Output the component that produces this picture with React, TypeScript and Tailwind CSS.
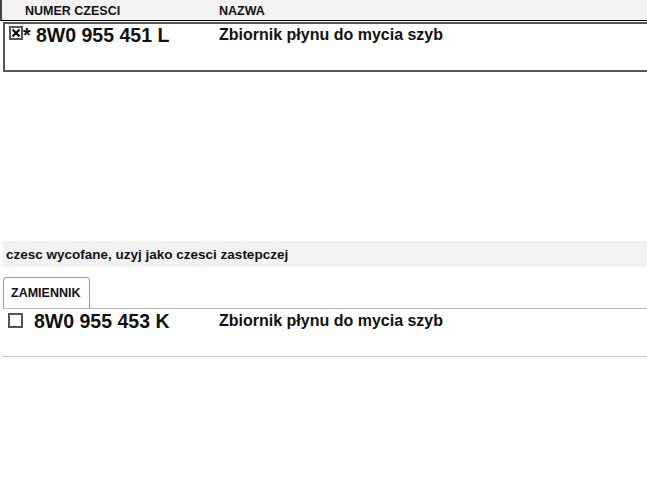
import React from 'react'

function Checkbox({ checked, size }: { checked?: boolean; size: number }) {
  return (
    <svg width={size} height={size} viewBox={`0 0 ${size} ${size}`} className="shrink-0">
      <rect x="1" y="1" width={size - 2} height={size - 2} fill="#fff" stroke="#555" strokeWidth="2" />
      {checked && (
        <path
          d={`M3.5 3.5 L${size - 3.5} ${size - 3.5} M${size - 3.5} 3.5 L3.5 ${size - 3.5}`}
          stroke="#000"
          strokeWidth="2.2"
        />
      )}
    </svg>
  )
}

export default function App() {
  return (
    <div className="w-[647px] h-[497px] overflow-hidden bg-white text-[#111] font-['Liberation_Sans',Arial,sans-serif]">
      {/* header */}
      <div className="flex h-[21px] bg-[#f2f2f2] border-l-2 border-l-[#444] border-b border-b-black pt-[4px] text-[12.5px] leading-[14px] font-bold">
        <div className="w-[217px] pl-[23px]">NUMER CZESCI</div>
        <div>NAZWA</div>
      </div>

      {/* selected part */}
      <div className="mt-px ml-[3px] h-[50px] border-2 border-r-0 border-[#555]">
        <div className="flex items-start">
          <div className="w-[214px] flex items-start pl-[4px]">
            <div className="mt-[2px]">
              <Checkbox checked size={14} />
            </div>
            <span className="text-[19.5px] leading-[22px] font-bold whitespace-pre">* 8W0 955 451 L</span>
          </div>
          <span className="text-[16px] leading-[22px] font-bold">Zbiornik płynu do mycia szyb</span>
        </div>
      </div>

      {/* replacement info */}
      <div className="ml-[3px] mt-[169px] h-[26px] bg-[#f2f2f2] flex items-center pl-[3px] text-[13.5px] leading-[15px] font-bold">
        czesc wycofane, uzyj jako czesci zastepczej
      </div>

      <div className="ml-[3px] mt-[10px] flex">
        <div className="h-[31px] w-[87px] border border-b-0 border-[#999] rounded-t-[4px] pl-[7px] pt-[8px] text-[12.5px] leading-[14px] font-bold">
          ZAMIENNIK
        </div>
      </div>

      <div className="ml-[3px] border-t border-[#bbb]">
        <div className="h-[48px] border-b border-[#c4c4c4] flex items-start pt-[1px]">
          <div className="w-[216px] flex items-start pl-[5px]">
            <div className="mt-[3px] mr-[11px]">
              <Checkbox size={15} />
            </div>
            <span className="text-[19.5px] leading-[22px] font-bold">8W0 955 453 K</span>
          </div>
          <span className="text-[16px] leading-[22px] font-bold">Zbiornik płynu do mycia szyb</span>
        </div>
      </div>
    </div>
  )
}
